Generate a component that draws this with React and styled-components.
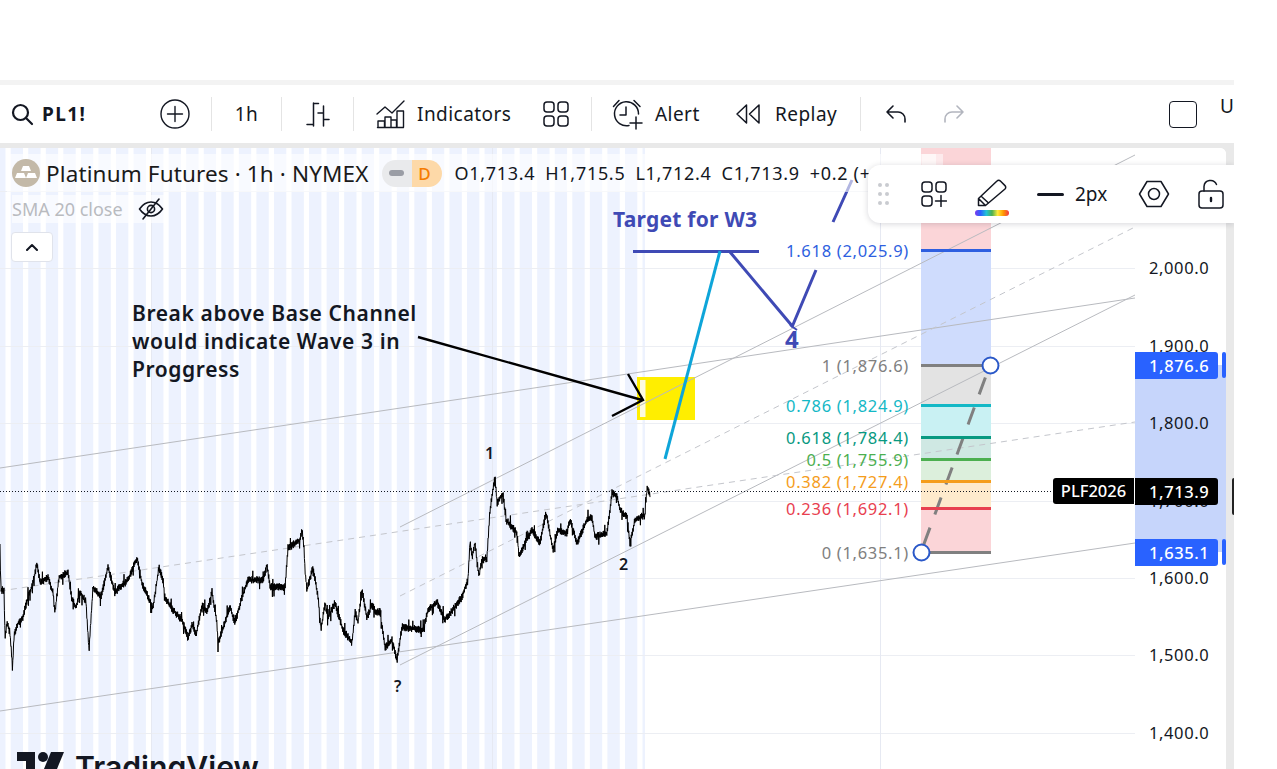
import React from 'react';
import styled, { createGlobalStyle } from 'styled-components';

const UI_FONT = '"Noto Sans", "Open Sans", "Liberation Sans", sans-serif';

const GlobalStyle = createGlobalStyle`
    html, body {
        margin: 0;
        padding: 0;
        background: #fff;
        overflow: hidden;
    }
    body {
        font-family: ${UI_FONT};
        color: #131722;
    }
`

// ---- chart data ----

// rough outline of the price line, the noise is added on top of it
const OUTLINE = [
    [0,553],[1,590],[4,590],[5,637],[7,623],[10,633],[12.5,668],[14,637],[18,623],[23,617],[28,597],[33,583],[37,563],
    [40,583],[48,577],[53,593],[55,613],[59,577],[68,573],[72,600],[76,607],[80,592],[86,602],[89,650],[93,587],[101,597],
    [108,567],[115,593],[120,587],[128,580],[137,558],[142,583],[148,597],[153,608],[159,567],[163,580],[165,598],[173,610],
    [182,620],[188,638],[192,625],[196,635],[202,605],[207,613],[212,592],[217,623],[218,643],[230,607],[235,623],[242,597],
    [248,580],[263,580],[267,565],[270,587],[285,587],[288,548],[300,540],[302,530],[304,547],[305,570],[307,590],[313,567],
    [318,597],[321,630],[325,603],[328,618],[335,603],[340,620],[343,630],[352,643],[355,612],[358,622],[362,590],[367,618],
    [372,605],[376,612],[380,612],[385,648],[392,640],[397,660],[402,627],[423,630],[428,610],[437,602],[445,620],[455,607],
    [462,597],[468,580],[470,542],[472,557],[475,543],[477,562],[479,575],[482,560],[487,558],[488,540],[490,510],[495,477],
    [497,503],[503,493],[506,520],[517,533],[519,556],[525,543],[532,530],[540,543],[546,513],[553,550],[558,530],[567,533],
    [570,520],[577,543],[587,520],[592,517],[595,537],[607,533],[612,493],[617,495],[620,510],[627,517],[630,543],[635,520],
    [645,515],[647,487],[650,495]
]

const seeded = (seed) => {
    let s = seed
    return () => {
        s = (s * 16807) % 2147483647
        return (s - 1) / 2147483646
    }
}

const interpolate = (x) => {
    for (let i = 1; i < OUTLINE.length; i++) {
        const [x0, y0] = OUTLINE[i - 1]
        const [x1, y1] = OUTLINE[i]
        if (x <= x1) return y0 + (y1 - y0) * (x - x0) / (x1 - x0 || 1)
    }
    return OUTLINE[OUTLINE.length - 1][1]
}

// zigzag up and down so the line gets the dense look of hourly data
const buildPrice = () => {
    const rnd = seeded(4711)
    let d = ''
    let i = 0
    for (let x = 0; x <= 650; x += 0.4) {
        const side = i % 2 ? 1 : -1
        const spike = rnd() < 0.06 ? 6 : 0
        const y = interpolate(x) + side * (1 + rnd() * 3 + spike)
        d += `${d ? 'L' : 'M'}${x.toFixed(1)} ${y.toFixed(1)}`
        i++
    }
    return d
}

const PRICE_PATH = buildPrice()

const STRIPES = Array.from({ length: 37 }, (_, i) => 5.5 + i * 17.55)

const GRID_Y = [191, 268, 346, 423, 501, 578, 655, 733]
const GRID_X = [151, 492, 880]

const TRENDS = [
    { x1: 400, y1: 527, x2: 1135, y2: 155 },
    { x1: 400, y1: 665, x2: 1135, y2: 295 },
    { x1: 0, y1: 711, x2: 1135, y2: 543 },
    { x1: 0, y1: 468, x2: 1135, y2: 298 },
    { x1: 400, y1: 596, x2: 1135, y2: 227, dashed: true },
    { x1: 0, y1: 591, x2: 1135, y2: 422, dashed: true },
]

const FIB = [
    { label: '1.618 (2,025.9)', y: 250.5, color: '#2e5fe0', fill: '#cfdcfd' },
    { label: '1 (1,876.6)', y: 365.5, color: '#808080', fill: '#e3e3e3' },
    { label: '0.786 (1,824.9)', y: 405.5, color: '#14b8c6', fill: '#c9f1f3' },
    { label: '0.618 (1,784.4)', y: 437.5, color: '#089981', fill: '#cfe8e3' },
    { label: '0.5 (1,755.9)', y: 459.5, color: '#4caf50', fill: '#dcefdc' },
    { label: '0.382 (1,727.4)', y: 481.5, color: '#f59d1c', fill: '#feeacc' },
    { label: '0.236 (1,692.1)', y: 508.5, color: '#e8404f', fill: '#fbd5d8' },
    { label: '0 (1,635.1)', y: 552.5, color: '#808080' },
]

const AXIS_PRICES = [
    { label: '2,000.0', y: 268 },
    { label: '1,900.0', y: 346 },
    { label: '1,800.0', y: 423 },
    { label: '1,700.0', y: 501 },
    { label: '1,600.0', y: 578 },
    { label: '1,500.0', y: 655 },
    { label: '1,400.0', y: 733 },
]

const CHART_TOP = 148

// ---- icons ----

const Icon = ({ w, h, children, color = '#131722', sw = 1.5 }) => (
    <svg width={w} height={h} viewBox={`0 0 ${w} ${h}`} fill="none" stroke={color} strokeWidth={sw} strokeLinecap="round" strokeLinejoin="round">
        {children}
    </svg>
)

const SearchIcon = () => (
    <Icon w={24} h={24} sw={2.2}>
        <circle cx="10.5" cy="10.5" r="7.5" />
        <path d="M16 16l6 6" />
    </Icon>
)

const PlusCircle = () => (
    <Icon w={30} h={30} sw={1.4}>
        <circle cx="15" cy="15" r="14" />
        <path d="M15 7.5v15M7.5 15h15" />
    </Icon>
)

const BarsIcon = () => (
    <Icon w={24} h={28} sw={1.5}>
        <path d="M7.5 3v23M7.5 3.5h5M7.5 24.5H1M17.5 6v20M17.5 13H12M17.5 19.5h5.5" />
    </Icon>
)

const IndicatorsIcon = () => (
    <Icon w={30} h={30} sw={1.4}>
        <path d="M1 15l8-7 7 6L28 2" />
        <path d="M1.5 28.5h26M2 28v-6h6.5v6M9 28v-10h6v10M15 28v-7h5.5v7M21 28V12h6.5v16" />
    </Icon>
)

const LayoutIcon = ({ plus }) => (
    <Icon w={26} h={26} sw={1.5}>
        <rect x="1" y="1" width="10" height="10" rx="3" />
        <rect x="15" y="1" width="10" height="10" rx="3" />
        <rect x="1" y="15" width="10" height="10" rx="3" />
        {plus ? <path d="M20 14.5v11M14.5 20h11" /> : <rect x="15" y="15" width="10" height="10" rx="3" />}
    </Icon>
)

const AlertIcon = () => (
    <Icon w={32} h={32} sw={1.5}>
        <path d="M17 27.5A12 12 0 1 1 26.5 16" />
        <path d="M14 9v8H8M1.5 8.5L7 2.5M28 8.5L22 2.5M24 19v12M18 25h12" />
    </Icon>
)

const ReplayIcon = () => (
    <Icon w={26} h={22} sw={1.5}>
        <path d="M11.5 2L2 11l9.5 9zM24 2l-9.5 9 9.5 9z" />
    </Icon>
)

const UndoIcon = ({ color }) => (
    <Icon w={22} h={20} sw={1.6} color={color}>
        <path d="M8 2L2 8l6 6M2 8h11a7 7 0 0 1 7 7v3" />
    </Icon>
)

const PencilIcon = () => (
    <Icon w={30} h={28} sw={1.5}>
        <path d="M1.5 26.5v-7L20 2a2.4 2.4 0 0 1 3.4 0L28 6.6A2.4 2.4 0 0 1 28 10L8.5 26.5zM1.5 19.5l7 7M5 18l6.5 6" />
    </Icon>
)

const HexIcon = () => (
    <Icon w={32} h={28} sw={1.5}>
        <path d="M1.5 14L9 1.5h14L30.5 14 23 26.5H9z" />
        <circle cx="16" cy="14" r="5.5" />
    </Icon>
)

const LockIcon = () => (
    <Icon w={26} h={30} sw={1.5}>
        <path d="M6 12V7.5a6.5 6.5 0 0 1 12.5-2" />
        <rect x="1" y="12" width="24" height="17" rx="3" />
        <path d="M13 19v3" strokeWidth="2.4" />
    </Icon>
)

const EyeOff = () => (
    <Icon w={26} h={24} sw={1.6}>
        <path d="M1.5 12C5 7 9 5 13 5s8 2 11.5 7C21 17 17 19 13 19S5 17 1.5 12z" />
        <circle cx="13" cy="12" r="3.6" />
        <path d="M5 22L21 2" />
    </Icon>
)

const GoldIcon = () => (
    <svg width="28" height="28" viewBox="0 0 28 28">
        <circle cx="14" cy="14" r="14" fill="#c3b9a8" />
        <path d="M11 7h6l2 5H9zM5 14h7l2 5H3zM16 14h7l2 5H14z" fill="#fff" />
    </svg>
)

const TvLogo = () => (
    <svg width="47" height="29" viewBox="0 0 47 29">
        <path d="M0 0h18v29H9V9H0z" fill="#131722" />
        <circle cx="26" cy="5" r="5" fill="#131722" />
        <path d="M34 0h13L35 29H22z" fill="#131722" />
    </svg>
)

// ---- page ----

export default function App() {
    return (
        <>
            <GlobalStyle />
            <Page>
                <TopSpace />
                <Strip />
                <Toolbar>
                    <SymbolSearch>
                        <SearchIcon />
                        <Symbol>PL1!</Symbol>
                    </SymbolSearch>
                    <CompareBtn><PlusCircle /></CompareBtn>
                    <Divider />
                    <IntervalBtn>1h</IntervalBtn>
                    <Divider />
                    <BarsBtn><BarsIcon /></BarsBtn>
                    <Divider />
                    <ToolBtn $width={189} $pad={22} $gap={11}>
                        <IndicatorsIcon />
                        <span>Indicators</span>
                    </ToolBtn>
                    <LayoutBtn><LayoutIcon /></LayoutBtn>
                    <Divider />
                    <ToolBtn $width={143} $pad={20} $gap={11}>
                        <AlertIcon />
                        <span>Alert</span>
                    </ToolBtn>
                    <ToolBtn $width={125} $pad={0} $gap={14}>
                        <ReplayIcon />
                        <span>Replay</span>
                    </ToolBtn>
                    <Divider />
                    <UndoBtn><UndoIcon /></UndoBtn>
                    <RedoBtn><UndoIcon color="#b2b5be" /></RedoBtn>
                    <Grow />
                    <SquareBtn />
                    <CutLetter>U</CutLetter>
                </Toolbar>
                <Band />
                <ChartRow>
                    <ChartPane>
                        <Plot>
                            <ChartSvg width="1135" height="621" viewBox={`0 ${CHART_TOP} 1135 621`}>
                                <rect x="0" y={CHART_TOP} width="645" height="621" fill="#edf2fe" />
                                {STRIPES.map((x) => (
                                    <rect key={x} x={x} y={CHART_TOP} width={Math.min(5.2, 645 - x)} height="621" fill="#fff" />
                                ))}
                                {GRID_Y.map((y) => (
                                    <line key={y} x1="0" x2="1135" y1={y + 0.5} y2={y + 0.5} stroke="#eceef3" />
                                ))}
                                {GRID_X.map((x) => (
                                    <line key={x} x1={x + 0.5} x2={x + 0.5} y1={CHART_TOP} y2="769" stroke="#e6e9f2" />
                                ))}

                                <rect x="921" y={CHART_TOP} width="70" height="103" fill="#fbd5d8" />
                                <rect x="922" y="154" width="21" height="12" fill="#fdeaec" />
                                {FIB.slice(0, -1).map((f, i) => (
                                    <rect key={f.label} x="921" y={f.y} width="70" height={FIB[i + 1].y - f.y} fill={f.fill} />
                                ))}

                                <rect x="637" y="377" width="58" height="43" fill="#ffee00" />
                                <rect x="640" y="380" width="5.5" height="37" fill="#fdfbe0" />

                                {TRENDS.map(({ x1, y1, x2, y2, dashed }) => (
                                    <line key={`${x1}-${y1}`} x1={x1} y1={y1} x2={x2} y2={y2} stroke={dashed ? '#c4c6cc' : '#b8babf'} strokeDasharray={dashed ? '6 5' : undefined} />
                                ))}

                                <line x1="0" x2="1053" y1="491.5" y2="491.5" stroke="#131722" strokeDasharray="1 2" />
                                <path d={PRICE_PATH} fill="none" stroke="#000" strokeWidth="1" strokeLinejoin="round" />

                                <line x1="921" y1="552" x2="990" y2="365" stroke="#808080" strokeWidth="3" strokeDasharray="18 14" strokeDashoffset="-8" />
                                {FIB.map((f) => (
                                    <line key={f.label} x1="921" x2="991" y1={f.y} y2={f.y} stroke={f.color} strokeWidth="3" />
                                ))}
                                <circle cx="921.5" cy="552.5" r="8" fill="#fff" stroke="#2a58c8" strokeWidth="2" />
                                <circle cx="990.5" cy="365.5" r="8" fill="#fff" stroke="#2a58c8" strokeWidth="2" />

                                <g stroke="#3f4ab5" strokeWidth="3" fill="none">
                                    <path d="M633 251.5H759" />
                                    <path d="M730 252L793 327M792 327L816 270M833 222L852 180" />
                                    <path d="M790 325l7 5" strokeWidth="2" />
                                </g>
                                <line x1="665" y1="459" x2="720" y2="251" stroke="#0ea5d9" strokeWidth="3" />
                                <g stroke="#000" strokeWidth="2.4" fill="none">
                                    <path d="M418 337L642 400M628 374L643 400L612 416" />
                                </g>
                            </ChartSvg>

                            <Legend>
                                <TitleRow>
                                    <GoldIcon />
                                    <Title>Platinum Futures · 1h · NYMEX</Title>
                                    <StatusPill>
                                        <PillGray><PillDash /></PillGray>
                                        <PillOrange>D</PillOrange>
                                    </StatusPill>
                                    <Ohlc>O1,713.4</Ohlc>
                                    <Ohlc>H1,715.5</Ohlc>
                                    <Ohlc>L1,712.4</Ohlc>
                                    <Ohlc>C1,713.9</Ohlc>
                                    <Ohlc>+0.2 (+0.01%)</Ohlc>
                                </TitleRow>
                                <SmaRow>
                                    <SmaLabel>SMA 20 close</SmaLabel>
                                    <EyeOff />
                                </SmaRow>
                                <CollapseBtn>
                                    <svg width="14" height="8" viewBox="0 0 14 8" fill="none" stroke="#131722" strokeWidth="2" strokeLinecap="round" strokeLinejoin="round">
                                        <path d="M2 7l5-5 5 5" />
                                    </svg>
                                </CollapseBtn>
                            </Legend>

                            <Note $x={132} $y={299}>Break above Base Channel<br />would indicate Wave 3 in<br />Proggress</Note>
                            <BlueNote $x={613} $y={205}>Target for W3</BlueNote>
                            <WaveFour $x={785} $y={325}>4</WaveFour>
                            <WaveLabel $x={485} $y={442}>1</WaveLabel>
                            <WaveLabel $x={619} $y={553}>2</WaveLabel>
                            <WaveLabel $x={394} $y={675}>?</WaveLabel>

                            {FIB.map((f) => (
                                <FibLabel key={f.label} $color={f.color} style={{ top: f.y - CHART_TOP - 12 }}>{f.label}</FibLabel>
                            ))}

                            <Watermark>
                                <TvLogo />
                                <WatermarkText>TradingView</WatermarkText>
                            </Watermark>

                            <SymbolTag>PLF2026</SymbolTag>
                        </Plot>

                        <PriceAxis>
                            <AxisRange />
                            {AXIS_PRICES.map((p) => (
                                <AxisPrice key={p.label} style={{ top: p.y - CHART_TOP - 12 }}>{p.label}</AxisPrice>
                            ))}
                            <PriceTag $y={365}>1,876.6</PriceTag>
                            <PriceHandle $y={365} />
                            <PriceTag $y={552}>1,635.1</PriceTag>
                            <PriceHandle $y={552} />
                            <LastPrice>1,713.9</LastPrice>
                        </PriceAxis>
                    </ChartPane>
                    <Rail>
                        <RailKnob />
                    </Rail>

                    <FloatBar>
                        <DragDots>
                            {Array.from({ length: 6 }, (_, i) => <i key={i} />)}
                        </DragDots>
                        <FloatBtn $ml={32}><LayoutIcon plus /></FloatBtn>
                        <FloatBtn $ml={28}>
                            <ColorTool>
                                <PencilIcon />
                                <Rainbow />
                            </ColorTool>
                        </FloatBtn>
                        <FloatBtn $ml={28}>
                            <LineSample />
                            <LineText>2px</LineText>
                        </FloatBtn>
                        <FloatBtn $ml={31}><HexIcon /></FloatBtn>
                        <FloatBtn $ml={28}><LockIcon /></FloatBtn>
                    </FloatBar>
                </ChartRow>
            </Page>
        </>
    )
}

const Page = styled.div`
    width: 1234px;
    height: 769px;
    display: flex;
    flex-direction: column;
    overflow: hidden;
`

const TopSpace = styled.div`
    height: 80px;
    background: #fff;
`

const Strip = styled.div`
    height: 5px;
    background: #f3f3f3;
`

const Toolbar = styled.div`
    height: 58px;
    display: flex;
    align-items: center;
    background: #fff;
    font-size: 19px;
    letter-spacing: .45px;
`

const SymbolSearch = styled.div`
    width: 146px;
    padding-left: 10px;
    box-sizing: border-box;
    display: flex;
    align-items: center;
    gap: 8px;
`

const Symbol = styled.span`
    font-weight: 700;
    font-size: 19px;
    letter-spacing: 1.4px;
`

const CompareBtn = styled.div`
    width: 65px;
    padding-left: 14px;
    padding-right: 5px;
    box-sizing: border-box;
    display: flex;
`

const Divider = styled.div`
    width: 1px;
    height: 34px;
    background: #e4e4e4;
`

const IntervalBtn = styled.div`
    width: 69px;
    text-align: center;
`

const BarsBtn = styled.div`
    width: 71px;
    display: flex;
    justify-content: center;
`

const ToolBtn = styled.div`
    width: ${(p) => p.$width}px;
    padding-left: ${(p) => p.$pad}px;
    box-sizing: border-box;
    display: flex;
    align-items: center;
    gap: ${(p) => p.$gap}px;
`

const LayoutBtn = styled.div`
    width: 48px;
    display: flex;
`

const UndoBtn = styled.div`
    width: 58px;
    padding-left: 24px;
    box-sizing: border-box;
    display: flex;
`

const RedoBtn = styled.div`
    width: 46px;
    display: flex;
    padding-left: 24px;
    transform: scaleX(-1);
`

const Grow = styled.div`
    flex: 1;
`

const SquareBtn = styled.div`
    width: 28px;
    height: 27px;
    border: 1.5px solid #131722;
    border-radius: 4px;
    box-sizing: border-box;
    margin-right: 23px;
`

const CutLetter = styled.div`
    width: 14px;
    margin-top: -16px;
    font-size: 19px;
`

const Band = styled.div`
    height: 5px;
    background: #e9e9e9;
`

const ChartRow = styled.div`
    position: relative;
    flex: 1;
    display: flex;
    min-height: 0;
    background: #e9e9e9;
`

const ChartPane = styled.div`
    width: 1226px;
    display: flex;
    background: #fff;
    border-top-right-radius: 6px;
    overflow: hidden;
`

const Plot = styled.div`
    position: relative;
    width: 1135px;
    overflow: hidden;
`

const ChartSvg = styled.svg`
    display: block;
`

const Legend = styled.div`
    position: absolute;
    left: 12px;
    top: 11px;
    display: flex;
    flex-direction: column;
    align-items: flex-start;
`

const TitleRow = styled.div`
    display: flex;
    align-items: center;
    height: 28px;
    white-space: nowrap;
    background: rgba(255, 255, 255, .6);
    box-shadow: 0 0 0 5px rgba(255, 255, 255, .6);
`

const Title = styled.div`
    margin-left: 6px;
    font-size: 22.5px;
    letter-spacing: .13px;
    color: #1a1a1a;
`

const StatusPill = styled.div`
    margin-left: 13px;
    width: 60px;
    height: 27px;
    border-radius: 14px;
    overflow: hidden;
    display: flex;
    flex-shrink: 0;
`

const PillGray = styled.div`
    width: 30px;
    background: #e9eaec;
    display: flex;
    align-items: center;
    justify-content: center;
`

const PillDash = styled.div`
    width: 15px;
    height: 6px;
    border-radius: 3px;
    background: #9a9da5;
`

const PillOrange = styled.div`
    width: 30px;
    background: #fdd9a8;
    color: #f57c00;
    font-size: 17px;
    font-weight: 500;
    text-align: center;
    line-height: 27px;
    padding-right: 4px;
    box-sizing: border-box;
`

const Ohlc = styled.span`
    margin-left: 10px;
    font-size: 18px;
    letter-spacing: .7px;
    &:first-of-type {
        margin-left: 13px;
    }
`

const SmaRow = styled.div`
    display: flex;
    align-items: center;
    gap: 15px;
    margin-top: 8px;
    height: 28px;
    background: rgba(255, 255, 255, .6);
`

const SmaLabel = styled.span`
    font-size: 18px;
    color: #b9bbbf;
`

const CollapseBtn = styled.div`
    margin-top: 9px;
    margin-left: -1px;
    width: 42px;
    height: 30px;
    box-sizing: border-box;
    background: #fff;
    border: 1px solid #e0e3eb;
    border-radius: 4px;
    display: flex;
    align-items: center;
    justify-content: center;
`

const Note = styled.div`
    position: absolute;
    left: ${(p) => p.$x}px;
    top: ${(p) => p.$y - CHART_TOP}px;
    font-size: 21px;
    line-height: 28px;
    font-weight: 600;
    letter-spacing: .6px;
    color: #131722;
    white-space: nowrap;
`

const BlueNote = styled(Note)`
    font-weight: 700;
    letter-spacing: .25px;
    color: #3f4ab5;
`

const WaveFour = styled(BlueNote)`
    font-size: 24px;
`

const WaveLabel = styled.div`
    position: absolute;
    left: ${(p) => p.$x}px;
    top: ${(p) => p.$y - CHART_TOP}px;
    font-size: 16px;
    line-height: 22px;
    font-weight: 600;
    color: #131722;
`

const FibLabel = styled.div`
    position: absolute;
    right: 226px;
    font-size: 16.5px;
    line-height: 24px;
    letter-spacing: .7px;
    color: ${(p) => p.$color};
    white-space: nowrap;
`

const Watermark = styled.div`
    position: absolute;
    left: 17px;
    top: 604px;
    display: flex;
    align-items: flex-start;
    gap: 11px;
`

const WatermarkText = styled.div`
    font-family: Inter, "Liberation Sans", sans-serif;
    font-size: 30.2px;
    line-height: 30px;
    font-weight: 600;
    color: #131722;
`

const SymbolTag = styled.div`
    position: absolute;
    right: 1px;
    top: 330px;
    width: 81px;
    height: 26px;
    border-radius: 3px 0 0 3px;
    background: #000;
    color: #fff;
    font-size: 16.5px;
    font-weight: 500;
    line-height: 26px;
    text-align: center;
`

const PriceAxis = styled.div`
    position: relative;
    flex: 1;
    background: #fff;
`

const AxisRange = styled.div`
    position: absolute;
    left: 0;
    right: 0;
    top: 217px;
    height: 187px;
    background: #c6d5fb;
`

const AxisPrice = styled.div`
    position: absolute;
    left: 14px;
    font-size: 16.5px;
    line-height: 24px;
    letter-spacing: .6px;
    color: #131722;
`

const PriceTag = styled.div`
    position: absolute;
    left: 0;
    width: 83px;
    height: 27px;
    top: ${(p) => p.$y - CHART_TOP - 13}px;
    padding-left: 14px;
    box-sizing: border-box;
    background: #2962ff;
    border-radius: 0 3px 3px 0;
    color: #fff;
    font-size: 16.5px;
    font-weight: 500;
    line-height: 27px;
    letter-spacing: .6px;
`

const PriceHandle = styled.div`
    position: absolute;
    left: 87px;
    width: 4px;
    height: 26px;
    top: ${(p) => p.$y - CHART_TOP - 13}px;
    background: #2962ff;
    border-radius: 2px;
`

const LastPrice = styled(PriceTag).attrs({ $y: 491 })`
    background: #000;
`

const FloatBar = styled.div`
    position: absolute;
    left: 868px;
    top: 17px;
    width: 366px;
    height: 58px;
    padding-left: 10px;
    box-sizing: border-box;
    display: flex;
    align-items: center;
    background: #fff;
    border-radius: 12px 0 0 12px;
    box-shadow: 0 1px 6px rgba(0, 0, 30, .16);
`

const FloatBtn = styled.div`
    margin-left: ${(p) => p.$ml}px;
    display: flex;
    align-items: center;
    flex-shrink: 0;
`

const DragDots = styled.div`
    display: grid;
    grid-template-columns: 4px 4px;
    gap: 5px 3px;
    i {
        width: 4px;
        height: 4px;
        border-radius: 50%;
        background: #c9cbd0;
    }
`

const ColorTool = styled.div`
    display: flex;
    flex-direction: column;
    align-items: center;
    gap: 3px;
    padding-top: 6px;
`

const Rainbow = styled.div`
    width: 34px;
    height: 6px;
    border-radius: 3px;
    background: linear-gradient(90deg, #7c3aed, #2962ff, #22c3d6, #4caf50, #ffeb3b, #ff9800, #f23645);
`

const LineSample = styled.div`
    width: 27px;
    height: 3px;
    border-radius: 2px;
    background: #131722;
`

const LineText = styled.span`
    margin-left: 11px;
    font-size: 19px;
`

const Rail = styled.div`
    position: relative;
    flex: 1;
`

const RailKnob = styled.div`
    position: absolute;
    left: 6px;
    top: 330px;
    width: 2px;
    height: 37px;
    border-radius: 2px 0 0 2px;
    background: #222;
`
